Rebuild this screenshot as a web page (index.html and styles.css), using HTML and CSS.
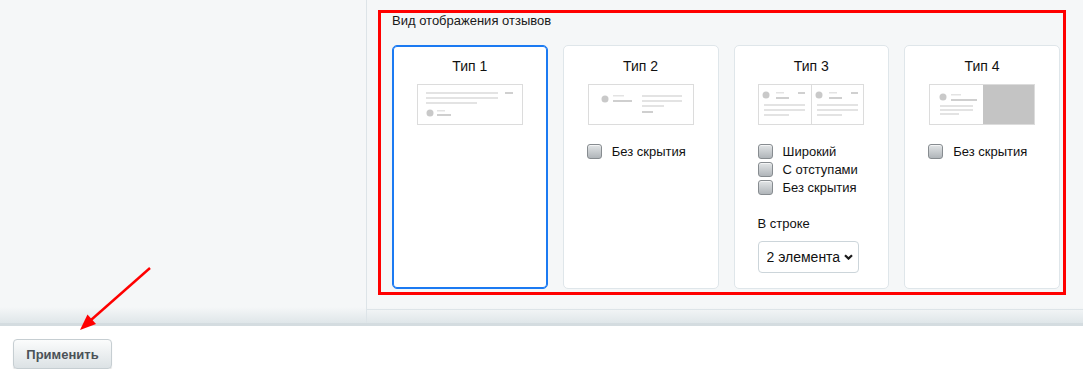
FILE: index.html
```html
<!DOCTYPE html>
<html lang="ru">
<head>
    <meta charset="UTF-8">
    <title>Вид отображения отзывов</title>
    <link rel="stylesheet" href="styles.css">
</head>
<body>
    <div class="main">
        <div class="sidebar"></div>
        <div class="content">
            <!-- Reviews view setting -->
            <div class="setting">
                <div class="setting-title">Вид отображения отзывов</div>
                <div class="types">
                    <div class="type active">
                        <div class="type-name">Тип 1</div>
                        <svg class="thumb" width="106" height="41" viewBox="0 0 106 41">
                            <rect x="0.5" y="0.5" width="105" height="40" fill="#fff" stroke="#dcdcdc"/>
                            <rect x="9" y="8" width="72" height="2" fill="#e3e3e3"/>
                            <rect x="9" y="13" width="72" height="2" fill="#e3e3e3"/>
                            <rect x="9" y="18" width="51" height="2" fill="#e3e3e3"/>
                            <rect x="88" y="8" width="8" height="2" fill="#d0d0d0"/>
                            <circle cx="13" cy="29" r="3.5" fill="#c9c9c9"/>
                            <rect x="20" y="26" width="8" height="1.5" fill="#e3e3e3"/>
                            <rect x="20" y="30" width="14" height="2" fill="#cfcfcf"/>
                        </svg>
                    </div>
                    <div class="type">
                        <div class="type-name">Тип 2</div>
                        <svg class="thumb" width="106" height="41" viewBox="0 0 106 41">
                            <rect x="0.5" y="0.5" width="105" height="40" fill="#fff" stroke="#dcdcdc"/>
                            <circle cx="17" cy="15" r="3.5" fill="#c9c9c9"/>
                            <rect x="25" y="11" width="11" height="1.5" fill="#e3e3e3"/>
                            <rect x="25" y="16" width="19" height="2" fill="#cfcfcf"/>
                            <rect x="54" y="11" width="40" height="2" fill="#e3e3e3"/>
                            <rect x="54" y="16" width="40" height="2" fill="#e3e3e3"/>
                            <rect x="54" y="21" width="22" height="2" fill="#e3e3e3"/>
                            <rect x="54" y="27" width="11" height="2" fill="#cfcfcf"/>
                        </svg>
                        <div class="options">
                            <div class="check-row">
                                <input type="checkbox" id="t2-nohide">
                                <label for="t2-nohide">Без скрытия</label>
                            </div>
                        </div>
                    </div>
                    <div class="type">
                        <div class="type-name">Тип 3</div>
                        <svg class="thumb" width="106" height="41" viewBox="0 0 106 41">
                            <rect x="0.5" y="0.5" width="105" height="40" fill="#fff" stroke="#dcdcdc"/>
                            <rect x="53" y="1" width="1" height="39" fill="#dcdcdc"/>
                            <circle cx="8" cy="11" r="3.5" fill="#c9c9c9"/>
                            <rect x="18" y="8" width="8" height="1.5" fill="#e3e3e3"/>
                            <rect x="18" y="13" width="13" height="2" fill="#cfcfcf"/>
                            <rect x="40" y="8" width="7" height="2" fill="#d0d0d0"/>
                            <rect x="6" y="20" width="41" height="2" fill="#e3e3e3"/>
                            <rect x="6" y="25" width="41" height="2" fill="#e3e3e3"/>
                            <rect x="6" y="30" width="25" height="2" fill="#e3e3e3"/>
                            <circle cx="61" cy="11" r="3.5" fill="#c9c9c9"/>
                            <rect x="71" y="8" width="8" height="1.5" fill="#e3e3e3"/>
                            <rect x="71" y="13" width="13" height="2" fill="#cfcfcf"/>
                            <rect x="93" y="8" width="7" height="2" fill="#d0d0d0"/>
                            <rect x="59" y="20" width="41" height="2" fill="#e3e3e3"/>
                            <rect x="59" y="25" width="41" height="2" fill="#e3e3e3"/>
                            <rect x="59" y="30" width="25" height="2" fill="#e3e3e3"/>
                        </svg>
                        <div class="options">
                            <div class="check-row">
                                <input type="checkbox" id="t3-wide">
                                <label for="t3-wide">Широкий</label>
                            </div>
                            <div class="check-row">
                                <input type="checkbox" id="t3-gaps">
                                <label for="t3-gaps">С отступами</label>
                            </div>
                            <div class="check-row">
                                <input type="checkbox" id="t3-nohide">
                                <label for="t3-nohide">Без скрытия</label>
                            </div>
                            <div class="per-row">В строке</div>
                            <div class="select-wrap">
                                <select class="per-row-select">
                                    <option>2 элемента</option>
                                    <option>3 элемента</option>
                                </select>
                                <svg class="chevron" width="9" height="6" viewBox="0 0 9 6">
                                    <path d="M1 1.2 L4.5 4.6 L8 1.2" fill="none" stroke="#1a1a1a" stroke-width="2.2"/>
                                </svg>
                            </div>
                        </div>
                    </div>
                    <div class="type">
                        <div class="type-name">Тип 4</div>
                        <svg class="thumb" width="106" height="41" viewBox="0 0 106 41">
                            <rect x="0.5" y="0.5" width="105" height="40" fill="#fff" stroke="#dcdcdc"/>
                            <rect x="54" y="1" width="51" height="39" fill="#c4c4c4"/>
                            <circle cx="14" cy="13" r="3.5" fill="#c9c9c9"/>
                            <rect x="22" y="10" width="10" height="1.5" fill="#e3e3e3"/>
                            <rect x="22" y="15" width="26" height="2" fill="#cfcfcf"/>
                            <rect x="11" y="21" width="33" height="2" fill="#e3e3e3"/>
                            <rect x="11" y="25" width="33" height="2" fill="#e3e3e3"/>
                            <rect x="11" y="29" width="19" height="2" fill="#e3e3e3"/>
                        </svg>
                        <div class="options">
                            <div class="check-row">
                                <input type="checkbox" id="t4-nohide">
                                <label for="t4-nohide">Без скрытия</label>
                            </div>
                        </div>
                    </div>
                </div>
            </div>
            <div class="subpanel"></div>
        </div>
    </div>

    <div class="footer">
        <button type="button" class="apply">Применить</button>
    </div>

    <!-- Annotation arrow -->
    <svg class="arrow" width="160" height="340" viewBox="0 0 160 340">
        <line x1="150" y1="268" x2="91" y2="320" stroke="#f00" stroke-width="2.4"/>
        <polygon points="80,330 87.5,314.5 96,324" fill="#f00"/>
    </svg>
</body>
</html>
```

FILE: styles.css
```css
body {
    margin: 0;
    font-family: "Liberation Sans", Arial, sans-serif;
    background: #fff;
    color: #111;
}

.main {
    display: flex;
    height: 326px;
    box-sizing: border-box;
    border-bottom: 3px solid #d4dce0;
    background: linear-gradient(to bottom, #f5f7f8 0, #f5f7f8 307px, #dfe6e9 323px);
}

.sidebar {
    width: 366px;
    border-right: 1px solid #dde4e8;
}

.content {
    flex: 1;
    display: flex;
    flex-direction: column;
    padding: 10px 17px 0 11px;
}

.setting {
    height: 285px;
    box-sizing: border-box;
    border: 3px solid #ff0000;
    padding: 0 3px 0 11px;
    display: flex;
    flex-direction: column;
}

.setting-title {
    font-size: 13px;
    line-height: 15px;
    color: #1a1a1a;
    margin-bottom: 17px;
}

.types {
    flex: 1;
    display: flex;
    gap: 15px;
    padding-bottom: 3px;
}

.type {
    flex: 1;
    background: #fff;
    border: 1px solid #dfe6ea;
    border-radius: 5px;
    padding-top: 12px;
}

.type.active {
    border-color: #1b7af2;
    box-shadow: inset 0 0 0 1px #1b7af2;
}

.type-name {
    text-align: center;
    font-size: 14px;
    line-height: 16px;
    color: #111;
}

.thumb {
    display: block;
    margin: 10px auto 0;
}

.options {
    margin-top: 19px;
    padding-left: 23px;
}

.check-row {
    display: flex;
    align-items: flex-start;
    gap: 10px;
    height: 15px;
    margin-bottom: 3px;
}

.check-row input {
    appearance: none;
    -webkit-appearance: none;
    margin: 0;
    width: 15px;
    height: 15px;
    box-sizing: border-box;
    border: 1px solid #878c90;
    border-radius: 3px;
    background: linear-gradient(to bottom, #e2e5e7, #b0b5b9);
    box-shadow: inset 0 1px 0 rgba(255, 255, 255, 0.6);
}

.check-row label {
    font-size: 13px;
    line-height: 15px;
    color: #111;
}

.per-row {
    margin-top: 21px;
    font-size: 13px;
    line-height: 15px;
    color: #111;
}

.select-wrap {
    position: relative;
    width: 101px;
    margin-top: 10px;
}

.per-row-select {
    appearance: none;
    -webkit-appearance: none;
    display: block;
    width: 101px;
    height: 32px;
    border: 1px solid #ccd5da;
    border-radius: 4px;
    background: #fff;
    padding: 0 0 0 8px;
    font-family: "Liberation Sans", Arial, sans-serif;
    font-size: 14px;
    color: #111;
}

.chevron {
    position: absolute;
    right: 6px;
    top: 13px;
}

.subpanel {
    flex: 1;
    margin: 14px -17px 0 -11px;
    border-top: 1px solid #dde4e8;
}

.footer {
    padding: 13px 0 0 13px;
}

.apply {
    width: 99px;
    height: 30px;
    border: 1px solid #c6ced2;
    border-radius: 4px;
    background: linear-gradient(to bottom, #fbfcfc, #dce2e5);
    box-shadow: 0 1px 1px rgba(0, 0, 0, 0.15);
    font-family: "Liberation Sans", Arial, sans-serif;
    font-size: 13px;
    font-weight: bold;
    color: #4b5257;
    padding: 0;
}

.arrow {
    position: absolute;
    left: 0;
    top: 0;
    pointer-events: none;
}
```
